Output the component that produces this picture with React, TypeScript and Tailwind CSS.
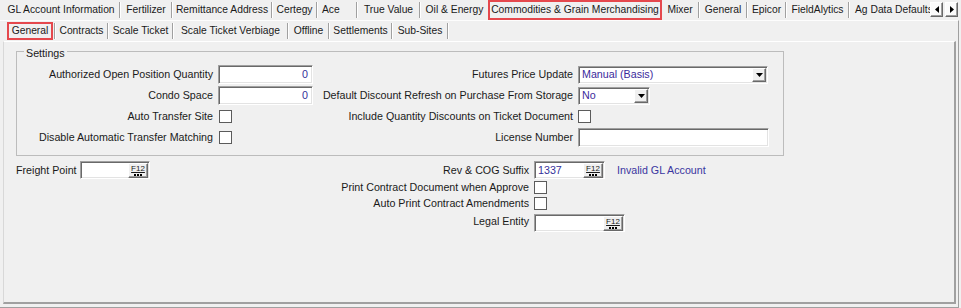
import React from "react";

type Tab = { label: string; w: string; pad: string; sel?: boolean; sep?: boolean };

const topTabs: Tab[] = [
  { label: "GL Account Information", w: "w-[118px]", pad: "justify-center", sep: true },
  { label: "Fertilizer", w: "w-[52px]", pad: "justify-center", sep: true },
  { label: "Remittance Address", w: "w-[100px]", pad: "justify-center", sep: true },
  { label: "Certegy", w: "w-[45px]", pad: "justify-center", sep: true },
  { label: "Ace", w: "w-[40px]", pad: "justify-start pl-[4px]", sep: true },
  { label: "True Value", w: "w-[63px]", pad: "justify-center", sep: true },
  { label: "Oil & Energy", w: "w-[67px]", pad: "justify-center" },
  { label: "Commodities & Grain Merchandising", w: "w-[174px]", pad: "justify-center", sel: true },
  { label: "Mixer", w: "w-[38px]", pad: "justify-center", sep: true },
  { label: "General", w: "w-[48px]", pad: "justify-center", sep: true },
  { label: "Epicor", w: "w-[39px]", pad: "justify-center", sep: true },
  { label: "FieldAlytics", w: "w-[63px]", pad: "justify-center", sep: true },
  { label: "Ag Data Defaults", w: "w-[90px]", pad: "justify-start pl-[5px]" },
];

const subTabs: Tab[] = [
  { label: "Contracts", w: "w-[53px]", pad: "justify-center", sep: true },
  { label: "Scale Ticket", w: "w-[65px]", pad: "justify-center", sep: true },
  { label: "Scale Ticket Verbiage", w: "w-[115px]", pad: "justify-center", sep: true },
  { label: "Offline", w: "w-[41px]", pad: "justify-center", sep: true },
  { label: "Settlements", w: "w-[63px]", pad: "justify-center", sep: true },
  { label: "Sub-Sites", w: "w-[56px]", pad: "justify-center", sep: true },
];

const sunken =
  "border border-t-[#a0a0a0] border-l-[#a0a0a0] border-r-white border-b-white bg-white shadow-[inset_1px_1px_0_#696969,inset_-1px_-1px_0_#e3e3e3]";
const raised =
  "border border-t-white border-l-white border-r-[#696969] border-b-[#696969] bg-[#f0f0f0] shadow-[inset_-1px_-1px_0_#a0a0a0]";

function Sep() {
  return <span className="h-[16px] w-[2px] shrink-0 border-l border-[#a0a0a0] bg-white" />;
}

function TabItem({ t }: { t: Tab }) {
  return (
    <div
      className={`flex h-full shrink-0 items-center ${t.w} ${
        t.sel ? "border-2 border-[#e5484d]" : ""
      }`}
    >
      <span className={`flex min-w-0 flex-1 overflow-hidden whitespace-nowrap ${t.pad}`}>{t.label}</span>
      {t.sep && <Sep />}
    </div>
  );
}

function ScrollBtn({ dir }: { dir: "l" | "r" }) {
  return (
    <div className={`flex h-[15px] w-[13px] items-center justify-center ${raised} bg-[#fbfbfb]`}>
      <svg width="4" height="7" viewBox="0 0 4 7">
        {dir === "l" ? <path d="M4 0 L0 3.5 L4 7 Z" fill="#000" /> : <path d="M0 0 L4 3.5 L0 7 Z" fill="#000" />}
      </svg>
    </div>
  );
}

function Checkbox() {
  return <div className="h-[13px] w-[13px] shrink-0 border border-[#5b5b5b] bg-white" />;
}

function Label({ children }: { children: React.ReactNode }) {
  return <div className="flex items-center justify-end whitespace-nowrap pr-[5px]">{children}</div>;
}

function NumInput({ value }: { value: string }) {
  return (
    <div className={`flex h-[19px] w-[95px] items-center justify-end pr-[4px] text-[#33309a] ${sunken}`}>
      {value}
    </div>
  );
}

function Select({ value, w }: { value: string; w: string }) {
  return (
    <div className={`flex h-[18px] items-stretch ${w} ${sunken}`}>
      <span className="flex flex-1 items-center pl-[3px] text-[#3b2a9c]">{value}</span>
      <div className={`m-[1px] flex w-[14px] items-center justify-center ${raised}`}>
        <svg width="7" height="4" viewBox="0 0 7 4">
          <path d="M0 0 H7 L3.5 4 Z" fill="#000" />
        </svg>
      </div>
    </div>
  );
}

function F12() {
  return (
    <div className={`mr-[1px] flex h-[15px] w-[20px] shrink-0 flex-col items-center justify-center ${raised}`}>
      <span className="text-[8px] leading-[8px] underline">F12</span>
      <span className="mt-[1px] flex gap-[1px]">
        <i className="h-[2px] w-[2px] bg-black" />
        <i className="h-[2px] w-[2px] bg-black" />
        <i className="h-[2px] w-[2px] bg-black" />
      </span>
    </div>
  );
}

function Lookup({ w, value }: { w: string; value?: string }) {
  return (
    <div className={`flex h-[18px] items-center ${w} ${sunken}`}>
      <span className="flex-1 pl-[3px] text-[#33309a]">{value ?? ""}</span>
      <F12 />
    </div>
  );
}

export default function App() {
  return (
    <div className="h-[308px] w-[961px] overflow-hidden bg-[#f0f0f0] font-['Liberation_Sans',Arial,sans-serif] text-[10.7px] text-[#1a1a1a]">
      {/* top tab strip */}
      <div className="flex h-[20px] items-stretch pl-[3px] text-[10.3px]">
        <div className="flex w-[927px] overflow-hidden">
          {topTabs.map((t) => (
            <TabItem key={t.label} t={t} />
          ))}
        </div>
        <div className="flex items-start gap-[2px] pt-[2px]">
          <ScrollBtn dir="l" />
          <ScrollBtn dir="r" />
        </div>
      </div>

      {/* outer page */}
      <div className="h-[288px] w-[959px] border-t border-r border-b border-t-[#fdfdfd] border-r-[#a0a0a0] border-b-[#a0a0a0]">
        {/* sub tab strip */}
        <div className="flex h-[20px] items-center pl-[7px] text-[10.3px]">
          <div className="flex h-[18px] w-[46px] shrink-0 items-center justify-center border-2 border-[#e5484d]">
            General
          </div>
          <div className="flex h-full w-[3px] items-center justify-end">
            <Sep />
          </div>
          {subTabs.map((t) => (
            <TabItem key={t.label} t={t} />
          ))}
        </div>

        {/* inner page */}
        <div className="ml-[3px] h-[263px] w-[953px] border-t border-l border-r-2 border-b-2 border-t-white border-l-[#d8d8d8] border-r-[#a0a0a0] border-b-[#a0a0a0]">
          <fieldset className="ml-[12px] mt-[1px] w-[768px] border border-[#bcbcbc] pb-[8px]">
            <legend className="ml-[7px] px-[2px] pt-[4px] leading-[13px]">Settings</legend>
            <div className="mt-[5px] grid grid-cols-[201px_95px_265px_191px] grid-rows-[19px_19px_19px_19px] gap-y-[2px]">
              <Label>Authorized Open Position Quantity</Label>
              <NumInput value="0" />
              <Label>Futures Price Update</Label>
              <div className="flex items-center">
                <Select value="Manual (Basis)" w="w-[190px]" />
              </div>

              <Label>Condo Space</Label>
              <NumInput value="0" />
              <Label>Default Discount Refresh on Purchase From Storage</Label>
              <div className="flex items-center">
                <Select value="No" w="w-[72px]" />
              </div>

              <Label>Auto Transfer Site</Label>
              <div className="flex items-center pl-[1px]">
                <Checkbox />
              </div>
              <Label>Include Quantity Discounts on Ticket Document</Label>
              <div className="flex items-center">
                <Checkbox />
              </div>

              <Label>Disable Automatic Transfer Matching</Label>
              <div className="flex items-center pl-[1px]">
                <Checkbox />
              </div>
              <Label>License Number</Label>
              <div className={`h-[19px] w-[191px] ${sunken}`} />
            </div>
          </fieldset>

          <div className="mt-[5px] flex">
            <div className="ml-[12px] flex h-[18px] w-[134px] shrink-0 items-center">
              <span className="w-[64px] whitespace-nowrap">Freight Point</span>
              <Lookup w="w-[70px]" />
            </div>
            <div className="grid grid-cols-[384px_auto] grid-rows-[18px_16px_17px_20px]">
              <Label>Rev &amp; COG Suffix</Label>
              <div className="flex items-center">
                <Lookup w="w-[71px]" value="1337" />
                <span className="ml-[12px] whitespace-nowrap text-[#3a36a0]">Invalid GL Account</span>
              </div>

              <Label>Print Contract Document when Approve</Label>
              <div className="flex items-center">
                <Checkbox />
              </div>

              <Label>Auto Print Contract Amendments</Label>
              <div className="flex items-center">
                <Checkbox />
              </div>

              <div className="flex items-end justify-end pb-[3px] pr-[5px] whitespace-nowrap">Legal Entity</div>
              <div className="flex items-end">
                <Lookup w="w-[91px]" />
              </div>
            </div>
          </div>
        </div>
      </div>
    </div>
  );
}
